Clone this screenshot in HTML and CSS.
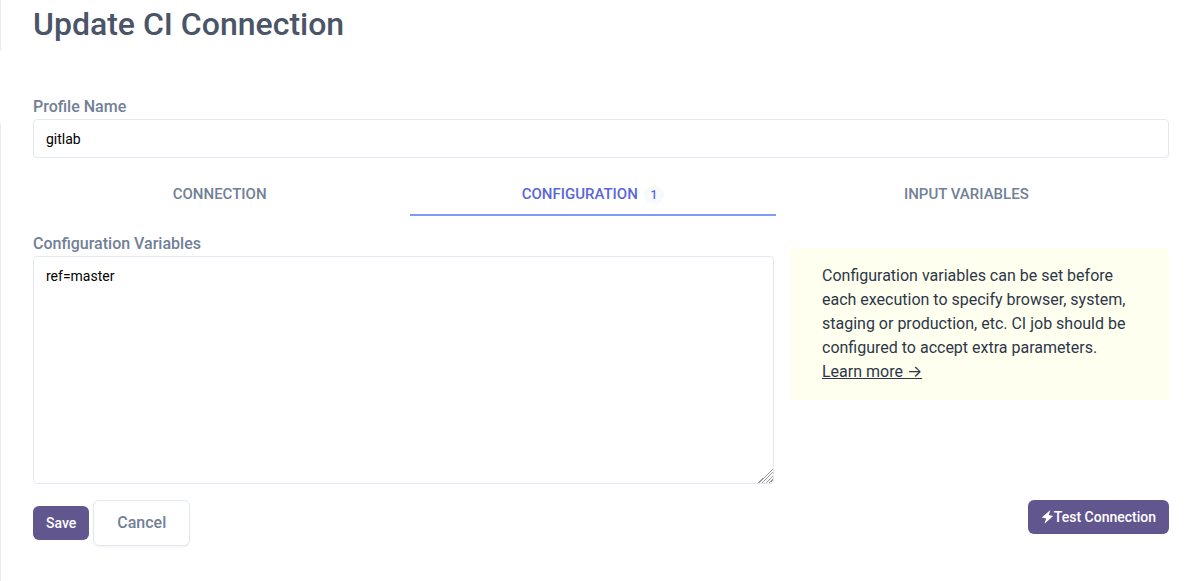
FILE: index.html
```html
<!DOCTYPE html>
<html lang="en">
<head>
<meta charset="utf-8">
<meta name="viewport" content="width=device-width, initial-scale=1">
<title>Update CI Connection</title>
<link rel="stylesheet" href="styles.css">
</head>
<body>
<main class="page">
  <h1 class="title">Update CI Connection</h1>
  <form class="form">
    <div class="field">
      <label class="label" for="profile">Profile Name</label>
      <input class="control" id="profile" type="text" value="gitlab">
    </div>
    <nav class="tabs">
      <a class="tab" href="#connection">CONNECTION</a>
      <a class="tab tab-active" href="#configuration">CONFIGURATION <span class="count">1</span></a>
      <a class="tab" href="#variables">INPUT VARIABLES</a>
    </nav>
    <div class="columns">
      <div class="field">
        <label class="label" for="config">Configuration Variables</label>
        <textarea class="control area" id="config">ref=master</textarea>
      </div>
      <aside class="hint">Configuration variables can be set before each execution to specify browser, system, staging or production, etc. CI job should be configured to accept extra parameters. <a class="more" href="#docs">Learn more <span class="arrow">→</span></a></aside>
    </div>
    <div class="actions">
      <div class="main-actions">
        <button class="button" type="submit">Save</button>
        <button class="cancel" type="button">Cancel</button>
      </div>
      <button class="button" type="button"><svg class="bolt" viewBox="0 0 13 14" aria-hidden="true"><path d="M9.4 0 0.8 7.6 5.2 8.6 3.4 13.8 12.2 5.9 7.7 4.9z" fill="currentColor"/></svg>Test Connection</button>
    </div>
  </form>
</main>
</body>
</html>
```
FILE: styles.css
```css
*, *::before, *::after { box-sizing: border-box; }
body {
  margin: 0;
  background: #fff;
  color: #2d3748;
  font: 500 16px/24px Roboto, "Noto Sans", sans-serif;
}
.page {
  min-height: 100vh;
  padding: 4px 31px 32px 33px;
  background:
    linear-gradient(#e8ecf2, #e8ecf2) 0 0 / 1px 51px no-repeat,
    linear-gradient(#e8ecf2, #e8ecf2) 0 123px / 1px 100% no-repeat;
}
.title {
  margin: 0 0 50px;
  color: #4a5568;
  font-size: 32px;
  font-weight: 500;
  line-height: 40px;
}
.field { display: flex; flex-direction: column; min-width: 0; }
.label { color: #718096; line-height: 25px; }
.control {
  width: 100%;
  height: 39px;
  padding: 8px 12px;
  border: 1px solid #e2e8f0;
  border-radius: 4px;
  background: #fff;
  color: #000;
  font: 400 14px/21px Roboto, "Noto Sans", sans-serif;
}
.tabs {
  display: grid;
  grid-template-columns: repeat(3, 1fr);
  gap: 8px;
  margin: 12px 0 15px;
  padding: 0 20px 0 4px;
}
.tab {
  height: 46px;
  padding: 12px 0 10px;
  border-bottom: 2px solid transparent;
  color: #718096;
  font-size: 15px;
  text-align: center;
  text-decoration: none;
}
.tab-active { border-color: #7f9cf5; color: #5a67d8; }
.count {
  display: inline-block;
  margin-left: 2px;
  padding: 0 7px;
  border-radius: 9px;
  background: #f7fafc;
  font-size: 12px;
  line-height: 18px;
}
.columns {
  display: grid;
  grid-template-columns: 741fr 379fr;
  gap: 16px;
  align-items: start;
}
.area { height: 228px; padding-top: 9px; resize: vertical; }
.area::-webkit-resizer {
  background: linear-gradient(135deg,
    transparent 50%, #999 50% 54%, transparent 54% 62%,
    #999 62% 66%, transparent 66% 74%, #999 74% 78%,
    transparent 78% 86%, #999 86% 90%, transparent 90%);
}
.hint {
  margin-top: 17px;
  padding: 16px 32px;
  background: #fffff0;
  font-weight: 400;
}
.more { display: block; width: max-content; color: inherit; }
.arrow { font-family: Inter, sans-serif; line-height: 1; }
.actions {
  display: flex;
  align-items: flex-start;
  justify-content: space-between;
  margin-top: 16px;
}
.main-actions { display: flex; align-items: center; gap: 4px; }
.button, .cancel { border-radius: 6px; font-family: inherit; font-weight: 500; }
.button {
  display: flex;
  align-items: center;
  height: 34px;
  padding: 0 13px;
  border: 0;
  background: #62568f;
  color: #fff;
  font-size: 14px;
  line-height: 20px;
}
.bolt { width: 13px; height: 14px; }
.cancel {
  height: 46px;
  padding: 0 23px;
  border: 1px solid #e2e8f0;
  background: #fff;
  box-shadow: 0 1px 2px rgba(0, 0, 0, 0.05);
  color: #718096;
  font-size: 16px;
  line-height: 24px;
}
```
